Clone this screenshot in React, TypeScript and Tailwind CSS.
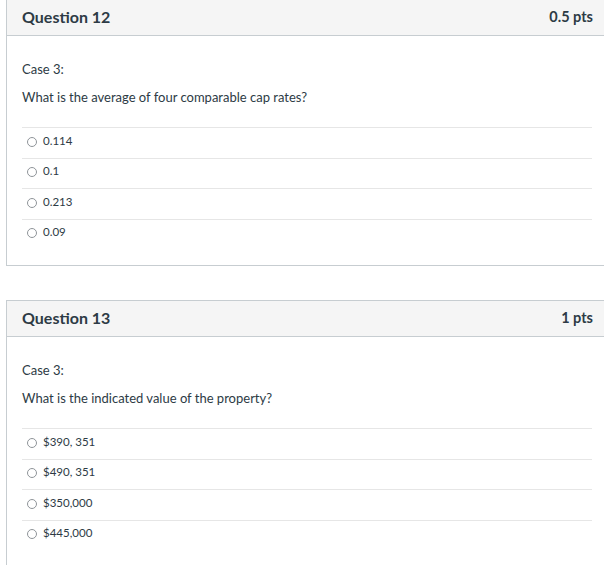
import React from 'react';

// Quiz question cards, Canvas-style
interface QuestionProps {
  title: string;
  points: string;
  caseText: string;
  prompt: string;
  answers: string[];
}

function Radio() {
  return (
    <span className="inline-block h-[10px] w-[10px] shrink-0 rounded-full border border-[#8f9499] bg-white" />
  );
}

function QuestionCard({ title, points, caseText, prompt, answers }: QuestionProps) {
  return (
    <div className="w-[602px] border border-[#c7cdd1] bg-white">
      <div className="flex h-[36px] items-center justify-between border-b border-[#c7cdd1] bg-[#f5f5f5] pb-px pl-[15px] pr-[14px]">
        <span className="text-[16px] font-bold text-[#2d3b45]">{title}</span>
        <span className="text-[14.5px] font-bold text-[#2d3b45]">{points}</span>
      </div>
      <div className="px-[15px] pt-[23px] pb-[16px] text-[13px] text-[#2d3b45]">
        <p className="leading-[20px]">{caseText}</p>
        <p className="mt-[8px] leading-[20px]">{prompt}</p>
        <div className="mt-[20px]">
          {answers.map((a) => (
            <div key={a} className="flex h-[30.5px] items-center gap-[6px] border-t border-[#e6e6e6] pb-[4px] pl-[5px]">
              <span className="mt-[2px] flex">
                <Radio />
              </span>
              <span className="text-[11.5px] leading-[20px]">{a}</span>
            </div>
          ))}
        </div>
      </div>
    </div>
  );
}

export default function App() {
  return (
    <div
      className="h-[565px] w-[604px] overflow-hidden bg-white pl-[6px]"
      style={{ fontFamily: 'Lato, "Open Sans", sans-serif' }}
    >
      <div className="-mt-px">
        <QuestionCard
          title="Question 12"
          points="0.5 pts"
          caseText="Case 3:"
          prompt="What is the average of four comparable cap rates?"
          answers={['0.114', '0.1', '0.213', '0.09']}
        />
      </div>
      <div className="mt-[34px]">
        <QuestionCard
          title="Question 13"
          points="1 pts"
          caseText="Case 3:"
          prompt="What is the indicated value of the property?"
          answers={['$390, 351', '$490, 351', '$350,000', '$445,000']}
        />
      </div>
    </div>
  );
}
